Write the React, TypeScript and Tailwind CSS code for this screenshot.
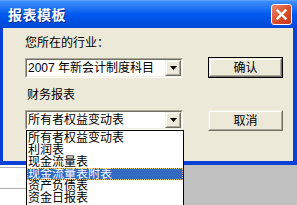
import React from 'react';

const font = { fontFamily: '"Liberation Sans", "Noto Sans CJK SC", sans-serif' };

const items = ['所有者权益变动表', '利润表', '现金流量表', '现金流量表附表', '资产负债表', '资金日报表'];

const Raised: React.FC<{ className?: string; children?: React.ReactNode }> = ({ className = '', children }) => (
  <div className={`border border-t-[#f1efe2] border-l-[#f1efe2] border-r-[#716f64] border-b-[#716f64] ${className}`}>
    <div className="w-full h-full flex items-center justify-center border border-t-white border-l-white border-r-[#aca899] border-b-[#aca899] bg-[#ece9d8]">
      {children}
    </div>
  </div>
);

const Combo: React.FC<{ value: string; children?: React.ReactNode }> = ({ value, children }) => (
  <div className="relative h-[20px] w-[158px] border border-t-[#aca899] border-l-[#aca899] border-r-white border-b-white">
    <div className="h-full flex items-center bg-white border border-t-[#716f64] border-l-[#716f64] border-r-[#f1efe2] border-b-[#f1efe2]">
      <span className="flex-1 pl-[1px] text-[12px] leading-[14px] text-black whitespace-nowrap">{value}</span>
      <Raised className="w-[16px] h-[16px]">
        <svg width="7" height="4" viewBox="0 0 7 4">
          <path d="M0 0h7L3.5 4z" fill="#000" />
        </svg>
      </Raised>
    </div>
    {children}
  </div>
);

export default function App() {
  return (
    <div className="relative w-[297px] h-[205px] overflow-hidden bg-[#c0c0c0]" style={font}>
      <div className="flex flex-col h-[165px]">
        {/* title bar */}
        <div className="h-[28px] flex items-center justify-between pl-[8px] pr-[5px] bg-gradient-to-b from-[#3d8ff7] via-[#0058ee] to-[#0047d8] border-t border-[#5aa0fb]">
          <span className="text-white font-bold text-[14px] leading-[16px] tracking-[0.5px] [text-shadow:1px_1px_0_#0a2a8a]">报表模板</span>
          <div className="w-[21px] h-[21px] rounded-[3px] border border-white bg-gradient-to-br from-[#ee8a6c] via-[#dc4f2c] to-[#c2361a] flex items-center justify-center">
            <svg width="11" height="11" viewBox="0 0 11 11">
              <path d="M1.5 1.5l8 8M9.5 1.5l-8 8" stroke="#fff" strokeWidth="2.4" strokeLinecap="square" />
            </svg>
          </div>
        </div>
        {/* body */}
        <div className="flex-1 flex bg-[#ece9d8] border-l-[3px] border-r-[4px] border-b-[4px] border-[#0840d8] pl-[22px]">
          <div className="flex flex-col w-[158px]">
            <div className="mt-[8px] h-[14px] text-[12px] leading-[14px] text-black">您所在的行业：</div>
            <div className="mt-[8px]">
              <Combo value="2007 年新会计制度科目" />
            </div>
            <div className="mt-[10px] h-[14px] pl-[2px] text-[12px] leading-[14px] text-black">财务报表</div>
            <div className="mt-[8px]">
              <Combo value="所有者权益变动表">
                <div className="absolute z-10 left-0 top-[19px] w-[158px] bg-white border border-black py-[1px]">
                  {items.map((it, i) => (
                    <div
                      key={it}
                      className={`h-[12px] flex items-center pl-[1px] text-[12px] leading-[12px] whitespace-nowrap ${
                        i === 3 ? 'bg-[#316ac5] text-white outline outline-1 outline-dotted -outline-offset-1 outline-[#e9c36a]' : 'text-black'
                      }`}
                    >
                      {it}
                    </div>
                  ))}
                </div>
              </Combo>
            </div>
          </div>
          <div className="flex flex-col w-[75px] ml-[25px]">
            <div className="mt-[29px] h-[21px] border border-black">
              <Raised className="w-full h-full">
                <span className="text-[12px] leading-[14px] text-black">确认</span>
              </Raised>
            </div>
            <Raised className="mt-[32px] h-[21px] w-full">
              <span className="text-[12px] leading-[14px] text-black">取消</span>
            </Raised>
          </div>
        </div>
      </div>
      {/* background below the dialog */}
      <div className="flex h-[40px]">
        <div className="w-[183px] bg-white flex flex-col">
          <div className="h-[2px]" />
          <div className="h-[21px] border-t border-[#b0b0b0]" />
          <div className="flex-1 border-t border-[#b0b0b0]" />
        </div>
        <div className="flex-1 bg-[#c0c0c0]" />
      </div>
    </div>
  );
}
